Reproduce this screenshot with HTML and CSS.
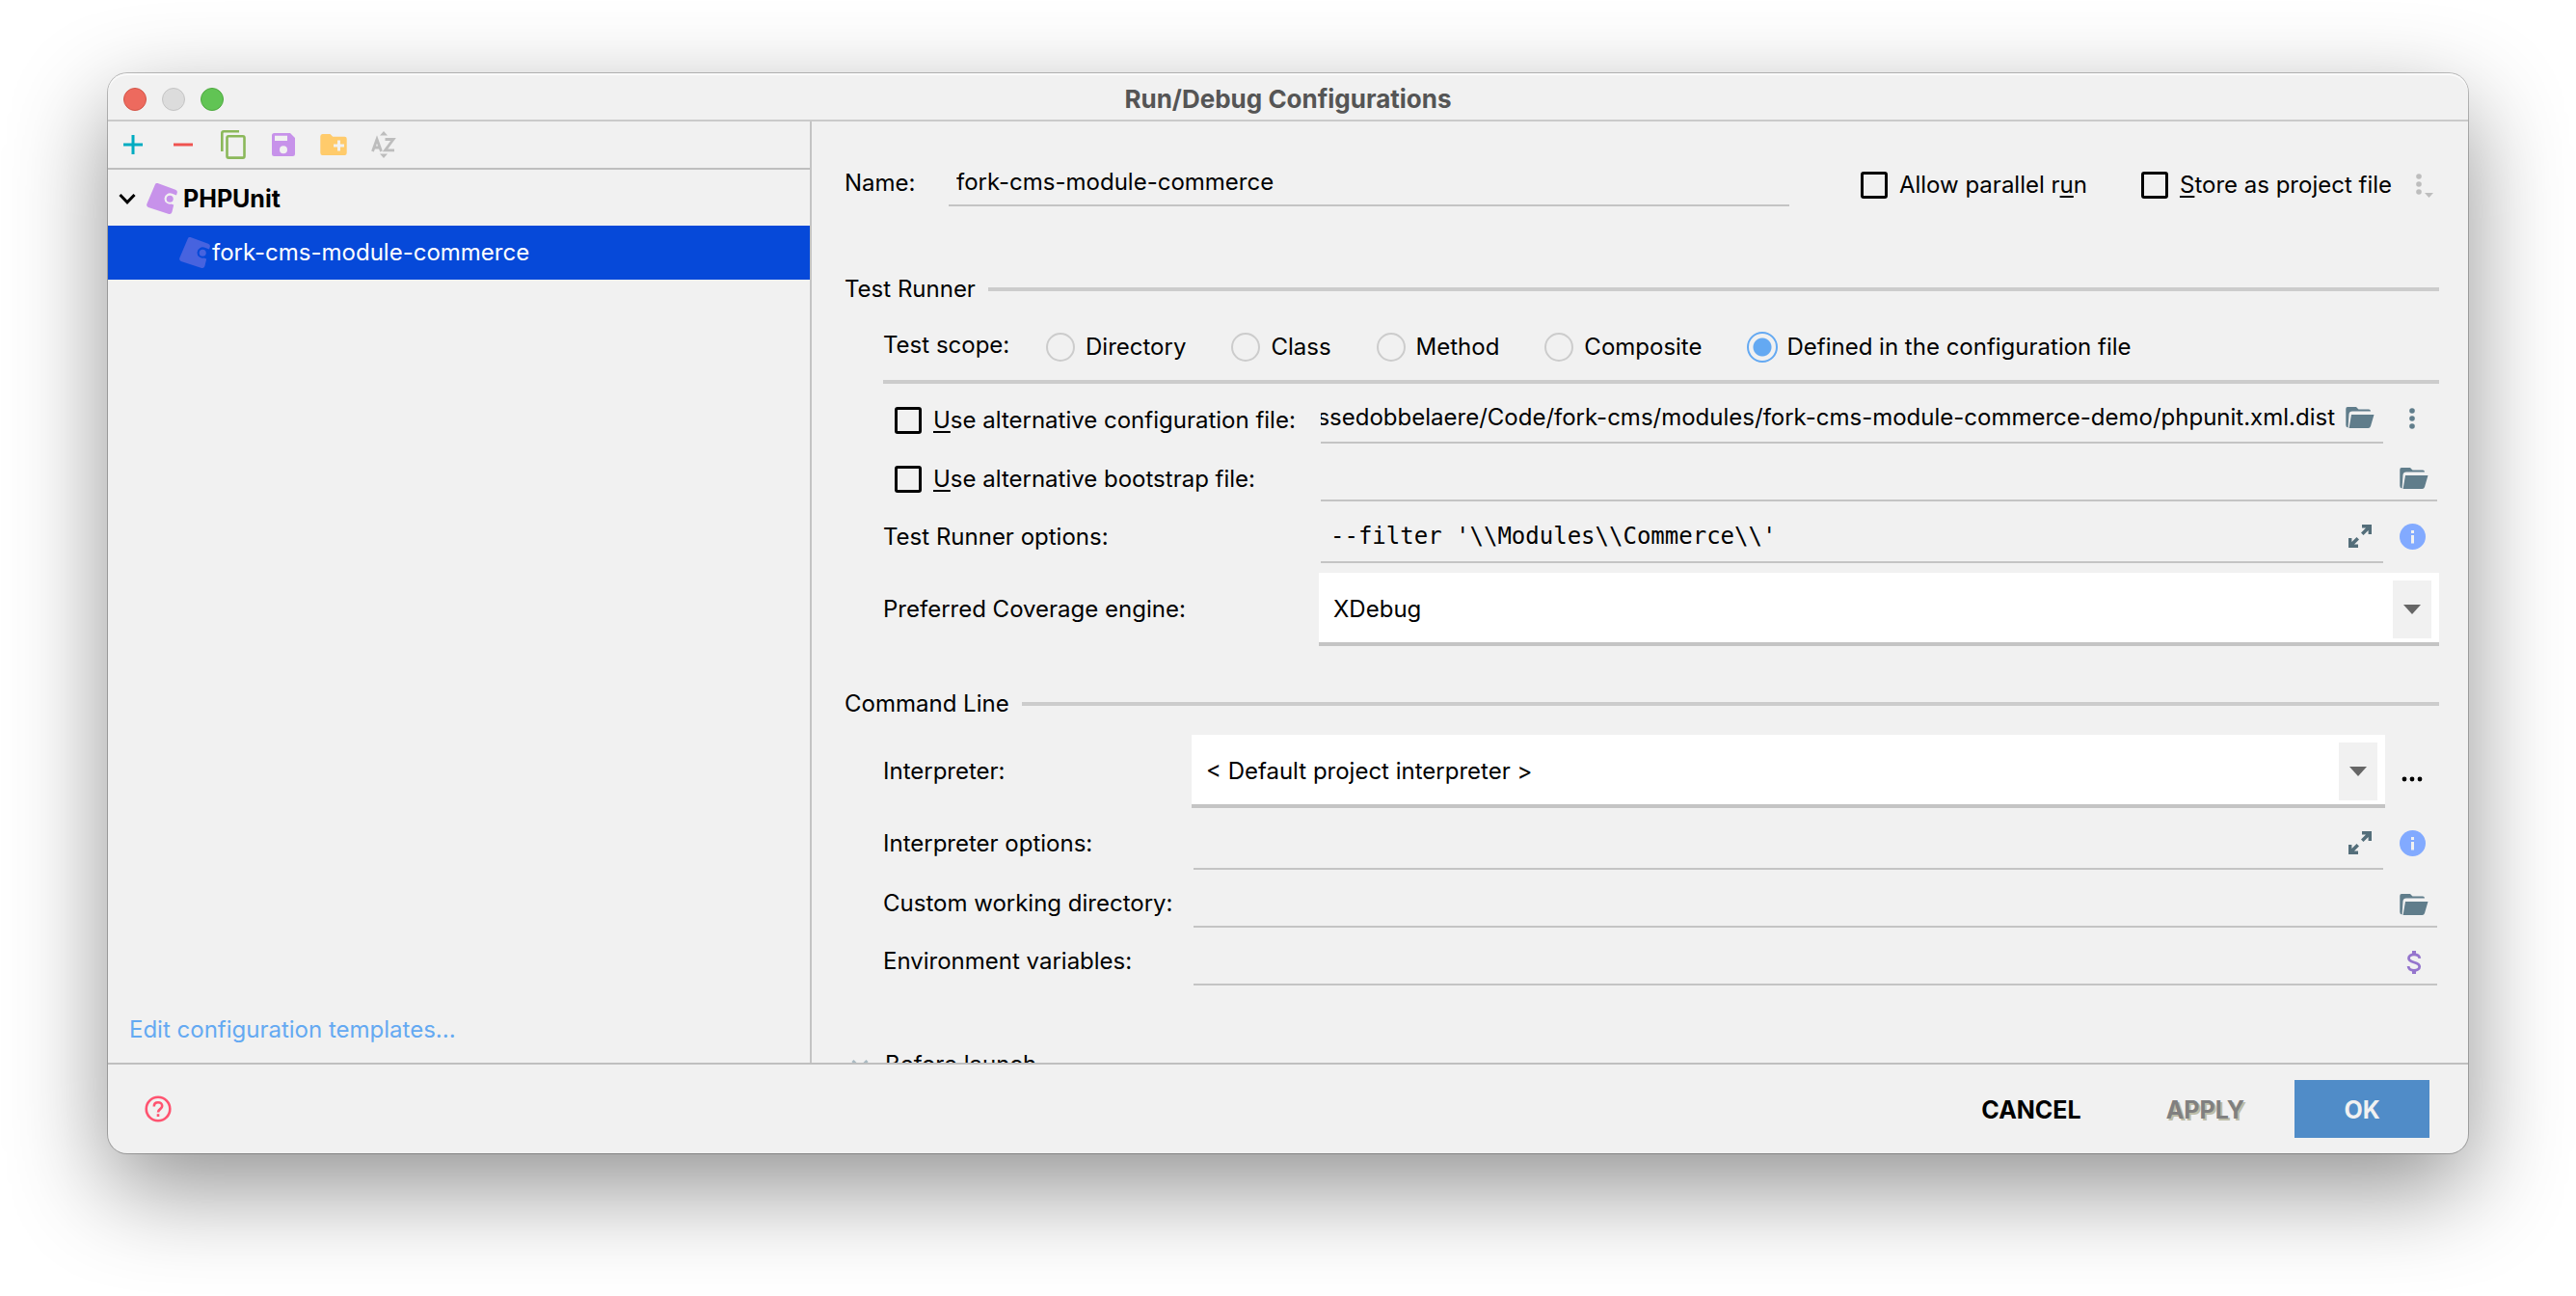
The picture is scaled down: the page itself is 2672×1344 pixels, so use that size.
FILE: index.html
```html
<!DOCTYPE html>
<html lang="en">
<head>
<meta charset="utf-8">
<title>Run/Debug Configurations</title>
<link rel="stylesheet" href="styles.css">
</head>
<body>
<svg class="sprite" aria-hidden="true">
  <symbol id="tag" viewBox="0 0 32 32"><path d="M8.800 1.400 Q9.600 -.6 11.600 .1 L30 6.800 Q32.300 7.800 31.800 9.800 L31 12.600 L26.500 10.800 A5.700 5.700 0 1 0 25.500 21.600 L28.200 22.400 L26.400 30 Q25.600 32.400 23.200 31.900 L1.800 25 Q-.4 24 .3 21.600 Z"/><circle cx="24.200" cy="16.200" r="3.500"/></symbol>
  <symbol id="folder" viewBox="0 0 30 22"><path d="M2 0 H11 L13.5 2.4 H24 Q26 2.4 26 4.6 H7 Q3.800 4.600 3.500 7.500 L2.600 21.500 Q.3 21 .3 19 V2 Q.3 0 2 0 Z"/><path d="M6 8 H29.500 L26 20 Q25.400 22 23.500 22 H3.600 Z"/></symbol>
  <symbol id="dots" viewBox="0 0 6 22"><circle cx="3" cy="3" r="2.800"/><circle cx="3" cy="11" r="2.800"/><circle cx="3" cy="19" r="2.800"/></symbol>
  <symbol id="expand" viewBox="0 0 24 24"><path d="M14 0 H24 V10 H20.600 V6 L15.500 11 L13 8.500 L18 3.400 H14 Z M10 24 H0 V14 H3.400 V18 L8.500 13 L11 15.500 L6 20.600 H10 Z"/></symbol>
  <symbol id="info" viewBox="0 0 27 27"><circle cx="13.500" cy="13.500" r="13.500"/><path fill="#f1f1f1" d="M12 7 h3 v3 h-3 z M12 12 h3 v8.500 h-3 z"/></symbol>
  <symbol id="arrow" viewBox="0 0 18 10"><path d="M0 0 H18 L9 10 Z"/></symbol>
  <symbol id="chevron" viewBox="0 0 18 12"><path d="M1.500 2 L9 9.800 L16.500 2" fill="none" stroke="currentColor" stroke-width="3"/></symbol>
</svg>

<main class="dialog">
  <header class="titlebar">
    <div class="lights">
      <button class="light light-close" aria-label="Close"></button>
      <button class="light light-min" aria-label="Minimize" disabled></button>
      <button class="light light-zoom" aria-label="Zoom"></button>
    </div>
    <h1 class="title">Run/Debug Configurations</h1>
  </header>

  <div class="body">
    <aside class="sidebar">
      <div class="toolbar">
        <button class="tool" aria-label="Add"><svg width="20" height="20" viewBox="0 0 20 20"><path d="M10 0 V20 M0 10 H20" stroke="#00acc1" stroke-width="3"/></svg></button>
        <button class="tool" aria-label="Remove"><svg width="20" height="20" viewBox="0 0 20 20"><path d="M0 10 H20" stroke="#ef5350" stroke-width="3"/></svg></button>
        <button class="tool" aria-label="Copy"><svg width="26" height="30" viewBox="0 0 26 30"><g fill="none" stroke="#8bb85a" stroke-width="2.600"><rect x="6.500" y="6.200" width="18" height="22.400" rx="1.600"/><path d="M1.300 22 V3 Q1.300 1.300 3 1.300 H19"/></g></svg></button>
        <button class="tool" aria-label="Save"><svg width="24" height="24" viewBox="0 0 24 24"><path fill="#c792ea" fill-rule="evenodd" d="M2.500 0 H19 L24 5 V21.500 Q24 24 21.500 24 H2.500 Q0 24 0 21.500 V2.500 Q0 0 2.500 0 Z M3 2.800 V8 H16 V2.800 Z M12 13.200 A4 4 0 1 0 12 21.200 A4 4 0 1 0 12 13.200 Z"/></svg></button>
        <button class="tool" aria-label="New folder"><svg width="28" height="22" viewBox="0 0 28 22"><path fill="#ffcb6b" fill-rule="evenodd" d="M2.500 0 H10.500 L13.200 2.800 H25.500 Q27.700 2.800 27.700 5 V19.500 Q27.700 22 25.500 22 H2.500 Q.3 22 .3 19.500 V2.500 Q.3 0 2.500 0 Z M18 6.500 V10.500 H14 V13.500 H18 V17.500 H21 V13.500 H25 V10.500 H21 V6.500 Z"/></svg></button>
        <button class="tool" aria-label="Sort" disabled><svg width="26" height="28" viewBox="0 0 26 28"><path d="M9 4.500 L13 0 L17 4.500 Z M9 23.500 L13 28 L17 23.500 Z" fill="#bdbdbd"/><path d="M1.500 21 L6 8.500 L10.500 21 M3 17 H9 M14.500 8.500 H23 L14.500 19.800 H24" fill="none" stroke="#bdbdbd" stroke-width="2.800"/></svg></button>
      </div>
      <ul class="tree">
        <li class="node node-group"><svg class="twisty" width="18" height="12"><use href="#chevron"/></svg><svg class="tag" width="32" height="32"><use href="#tag"/></svg>PHPUnit</li>
        <li class="node node-selected"><svg class="tag tag-selected" width="32" height="32"><use href="#tag"/></svg>fork-cms-module-commerce</li>
      </ul>
      <a class="templates" href="#templates">Edit configuration templates...</a>
    </aside>

    <form class="pane" id="config">
      <div class="name-row">
        <label for="name">Name:</label>
        <span class="field"><input id="name" type="text" value="fork-cms-module-commerce"></span>
        <div class="options">
          <label class="check"><input type="checkbox"><span>Allow parallel r<u>u</u>n</span></label>
          <label class="check"><input type="checkbox"><span><u>S</u>tore as project file</span></label>
          <button type="button" class="store-menu" aria-label="Storage options" disabled><svg width="18" height="26" viewBox="0 0 18 26"><g fill="#bdbdbd"><circle cx="3" cy="4" r="2.800"/><circle cx="3" cy="12" r="2.800"/><circle cx="3" cy="20" r="2.800"/><path d="M9 21 H18 L13.500 26 Z"/></g></svg></button>
        </div>
      </div>

      <h2 class="section section-first">Test Runner</h2>
      <div class="scope" role="radiogroup" aria-labelledby="scope">
        <span id="scope" class="scope-label">Test scope:</span>
        <label class="radio"><input type="radio" name="scope">Directory</label>
        <label class="radio"><input type="radio" name="scope">Class</label>
        <label class="radio"><input type="radio" name="scope">Method</label>
        <label class="radio"><input type="radio" name="scope">Composite</label>
        <label class="radio"><input type="radio" name="scope" checked>Defined in the configuration file</label>
      </div>
      <hr class="rule">
      <div class="grid grid-runner">
        <label class="check check-inset"><input type="checkbox"><span><u>U</u>se alternative configuration file:</span></label>
        <span class="field"><input class="path" type="text" aria-label="Configuration file" value="ssedobbelaere/Code/fork-cms/modules/fork-cms-module-commerce-demo/phpunit.xml.dist"><button type="button" class="icon slate" aria-label="Browse"><svg width="30" height="22"><use href="#folder"/></svg></button></span>
        <button type="button" class="icon side slate" aria-label="More"><svg width="6" height="22"><use href="#dots"/></svg></button>

        <label class="check check-inset"><input type="checkbox"><span><u>U</u>se alternative bootstrap file:</span></label>
        <span class="field wide"><input type="text" aria-label="Bootstrap file"><button type="button" class="icon slate" aria-label="Browse"><svg width="30" height="22"><use href="#folder"/></svg></button></span>

        <label for="runner-options">Test Runner options:</label>
        <span class="field"><input id="runner-options" class="mono" type="text" value="--filter '\\Modules\\Commerce\\'"><button type="button" class="icon slate-dark" aria-label="Expand"><svg width="24" height="24"><use href="#expand"/></svg></button></span>
        <button type="button" class="icon side blue" aria-label="Help"><svg width="27" height="27"><use href="#info"/></svg></button>

        <label for="coverage">Preferred Coverage engine:</label>
        <span class="combo wide"><select id="coverage"><option>XDebug</option></select><span class="combo-arrow"><svg width="18" height="10"><use href="#arrow"/></svg></span></span>
      </div>

      <h2 class="section section-next">Command Line</h2>
      <div class="grid grid-command">
        <label for="interpreter">Interpreter:</label>
        <span class="combo"><select id="interpreter"><option>&lt; Default project interpreter &gt;</option></select><span class="combo-arrow"><svg width="18" height="10"><use href="#arrow"/></svg></span></span>
        <button type="button" class="icon side more" aria-label="Choose interpreter"><svg width="22" height="6" viewBox="0 0 22 6"><circle cx="3" cy="3" r="2.400"/><circle cx="11" cy="3" r="2.400"/><circle cx="19" cy="3" r="2.400"/></svg></button>

        <label for="int-options">Interpreter options:</label>
        <span class="field"><input id="int-options" type="text"><button type="button" class="icon slate-dark" aria-label="Expand"><svg width="24" height="24"><use href="#expand"/></svg></button></span>
        <button type="button" class="icon side blue" aria-label="Help"><svg width="27" height="27"><use href="#info"/></svg></button>

        <label for="workdir">Custom working directory:</label>
        <span class="field wide"><input id="workdir" type="text"><button type="button" class="icon slate" aria-label="Browse"><svg width="30" height="22"><use href="#folder"/></svg></button></span>

        <label for="env">Environment variables:</label>
        <span class="field wide"><input id="env" type="text"><button type="button" class="icon" aria-label="Edit variables"><svg width="16" height="24" viewBox="0 0 16 24"><path d="M8 0 V4 M8 20 V24" stroke="#9575cd" stroke-width="4"/><path d="M13.800 7.800 C13.500 4.800 11 3.800 8 3.800 C4.800 3.800 2.500 5.300 2.500 7.800 C2.500 10.500 5 11.200 8 12 C11.500 12.900 13.700 13.800 13.700 16.500 C13.700 19 11 20.300 8 20.300 C4.600 20.300 2.300 18.800 2.100 16" fill="none" stroke="#9575cd" stroke-width="2.800"/></svg></button></span>
      </div>

      <h2 class="before"><svg class="before-twisty" width="18" height="12"><use href="#chevron"/></svg>Before launch</h2>
    </form>
  </div>

  <footer class="footer">
    <button class="help" aria-label="Help"><svg width="28" height="28" viewBox="0 0 28 28"><g fill="none" stroke="#ff5370" stroke-width="2.600"><circle cx="14" cy="14" r="12.300"/><path d="M9.800 11.400 C9.800 8.800 11.600 7.300 14 7.300 C16.400 7.300 18.200 8.800 18.200 11 C18.200 14 14 14.300 14 17.500"/><path d="M14 19.200 V22"/></g></svg></button>
    <button class="btn">CANCEL</button>
    <button class="btn btn-disabled" disabled>APPLY</button>
    <button class="btn btn-primary">OK</button>
  </footer>
</main>
</body>
</html>
```

FILE: styles.css
```css
* { box-sizing: border-box; }

body {
  margin: 0;
  background: #fff;
  color: #000;
  font: 24px/32px Inter, "Liberation Sans", sans-serif;
}

.sprite { display: none; }

svg { fill: currentColor; flex: none; display: block; }

button, input, select {
  margin: 0;
  padding: 0;
  border: 0;
  background: none;
  color: inherit;
  font: inherit;
  outline: 0;
}

h1, h2, ul { margin: 0; padding: 0; font: inherit; list-style: none; }

u { text-decoration-thickness: 2px; text-underline-offset: 3px; }

.dialog {
  display: flex;
  flex-direction: column;
  height: calc(100vh - 224px);
  margin: 76px 112px 148px;
  background: #f1f1f1;
  border-radius: 20px;
  box-shadow: 0 0 0 1px rgba(0, 0, 0, .24), 0 36px 100px rgba(0, 0, 0, .43), inset 0 2px 1px rgba(255, 255, 255, .7);
}

/* Title bar */
.titlebar {
  display: grid;
  grid-template-columns: 1fr auto 1fr;
  align-items: center;
  height: 50px;
  padding: 6px 16px 0;
  border-bottom: 2px solid #cacaca;
}

.lights { display: flex; gap: 16px; }
.light { width: 24px; height: 24px; border: 1px solid; border-radius: 50%; }
.light-close { background: #ed6a5e; border-color: #d35548; }
.light-min { background: #dcdcdc; border-color: #c4c4c4; }
.light-zoom { background: #61c454; border-color: #4fa940; }
.title { font-size: 26px; font-weight: 700; color: #555; }

.body { display: flex; flex: 1; min-height: 0; border-bottom: 2px solid #bfbfbf; }

/* Sidebar */
.sidebar {
  display: flex;
  flex-direction: column;
  width: 730px;
  border-right: 2px solid #c4c4c4;
}

.toolbar { display: flex; height: 50px; border-bottom: 2px solid #bfbfbf; }
.tool { display: grid; place-items: center; width: 52px; }

.tree { flex: 1; padding-top: 2px; }
.node { display: flex; align-items: center; height: 56px; }
.node-group { padding-left: 11px; font-size: 25px; font-weight: 700; }
.node-selected { padding-left: 74px; background: #0649d9; color: #fff; }
.twisty { margin-right: 11px; }
.tag { margin-right: 6px; color: #c792ea; }
.tag-selected { margin-right: 2px; color: #4763df; }

.templates {
  padding: 0 22px 18px;
  color: #64a9f2;
  text-decoration: none;
}

/* Settings pane */
.pane {
  flex: 1;
  min-width: 0;
  padding: 40px 30px 0 34px;
  overflow: hidden;
}

.name-row { display: flex; align-items: center; height: 48px; }
.name-row > label { width: 106px; }
.name-row .field { flex: 1; }
.name-row .field input { padding-left: 8px; }

.options { display: flex; align-items: center; padding: 4px 6px 0 72px; }
.options .check + .check { margin-left: 56px; }
.store-menu { margin-left: 25px; }

.check { display: flex; align-items: center; gap: 12px; }
.check input {
  appearance: none;
  width: 28px;
  height: 28px;
  border: 3px solid #000;
  border-radius: 3px;
}
.check-inset { padding: 4px 0 0 12px; }

.field {
  display: flex;
  align-items: center;
  margin: 0 2px;
  border-bottom: 2px solid #c4c4c4;
}
.name-row .field { height: 100%; }
.field input { flex: 1; min-width: 0; height: 32px; padding-left: 12px; }
/* A long path keeps its end, the file name, in view */
.field .path { padding: 0 2px 0 0; direction: rtl; }
.field .mono { padding-left: 10px; font: 24px/32px "DejaVu Sans Mono", monospace; }

.icon { display: grid; place-items: center; width: 48px; height: 48px; }
.wide .icon { padding-top: 4px; }
.side { width: 56px; align-self: center; }
.slate { color: #607d8b; }
.slate-dark { color: #546e7a; }
.blue { padding-bottom: 2px; color: #82aaff; }
.more { padding-top: 16px; }

.section { display: flex; align-items: center; gap: 13px; }
.section::after { content: ""; flex: 1; height: 4px; background: #ccc; }
.section-first { margin-top: 70px; }
.section-next { margin-top: 44px; }

.scope { display: flex; height: 32px; margin: 28px 0 18px 40px; }
.scope-label { width: 169px; line-height: 28px; }
.radio { display: flex; align-items: center; }
.radio + .radio { margin-left: 47px; }
.radio input {
  appearance: none;
  width: 30px;
  height: 30px;
  margin: 0 11px 0 0;
  border: 2px solid #ccc;
  border-radius: 50%;
}
.radio input:checked {
  width: 32px;
  height: 32px;
  margin-right: 9px;
  border-color: #64a9f2;
  background: radial-gradient(circle, #64a9f2 9px, transparent 10px);
}

.rule { height: 4px; margin: 0 0 0 40px; border: 0; background: #ccc; }

.grid { display: grid; row-gap: 10px; margin-left: 40px; }
.grid > label { align-self: center; }
.grid-runner {
  margin-top: 10px;
  grid-template-columns: 452px 1fr 56px;
  grid-template-rows: 52px 50px 54px 76px;
}
.grid-command {
  margin-top: 16px;
  grid-template-columns: 320px 1fr 56px;
  grid-template-rows: 76px 54px 50px 50px;
}
.wide { grid-column: 2 / 4; }

.combo { display: grid; background: #fff; border-bottom: 4px solid #c4c4c4; }
.combo select {
  grid-area: 1 / 1;
  appearance: none;
  padding: 4px 64px 0 15px;
}
.combo-arrow {
  grid-area: 1 / 1;
  display: grid;
  place-items: center;
  justify-self: end;
  width: 40px;
  margin: 8px 8px 4px;
  background: #f1f1f1;
  color: #666;
  pointer-events: none;
}

.before { display: flex; align-items: center; margin-top: 66px; padding-left: 7px; }
.before-twisty { margin-right: 17px; color: #a9bac2; }

/* Footer */
.footer {
  display: flex;
  align-items: center;
  height: 92px;
  padding: 0 40px 0 38px;
}
.help { margin-right: auto; }
.btn { height: 60px; padding: 2px 44px 0; font-size: 25px; font-weight: 700; }
.btn-disabled { color: #808080; text-shadow: 2px 2px #bdbda8; }
.btn-primary { width: 140px; margin-left: 8px; padding: 2px 0 0; background: #508cc8; color: #f1f1f1; }
```
